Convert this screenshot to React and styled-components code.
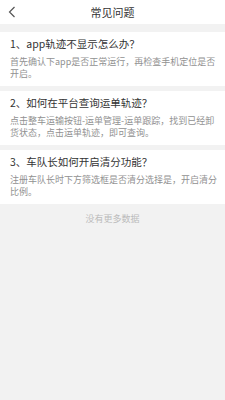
import React from "react"
import styled, { createGlobalStyle } from "styled-components"

const GlobalStyle = createGlobalStyle`
  html, body {
    margin: 0;
    padding: 0;
    background: #f2f2f2;
  }
  body {
    font-family: "Noto Sans CJK SC", "Noto Sans", sans-serif;
  }
`

const FAQS = [
  {
    q: "1、app轨迹不显示怎么办？",
    a: "首先确认下app是否正常运行，再检查手机定位是否开启。",
  },
  {
    q: "2、如何在平台查询运单轨迹？",
    a: "点击整车运输按钮-运单管理-运单跟踪，找到已经卸货状态，点击运单轨迹，即可查询。",
  },
  {
    q: "3、车队长如何开启清分功能？",
    a: "注册车队长时下方筛选框是否清分选择是，开启清分比例。",
  },
]

const App = () => {
  return (
    <Page>
      <GlobalStyle />
      <Header>
        <BackButton aria-label="返回">
          <svg width="8" height="12" viewBox="0 0 8 12">
            <polyline
              points="6.5,1 1.5,6 6.5,11"
              fill="none"
              stroke="#555"
              strokeWidth="1.2"
            />
          </svg>
        </BackButton>
        <Title>常见问题</Title>
      </Header>
      <List>
        {FAQS.map((item) => (
          <Card key={item.q}>
            <Question>{item.q}</Question>
            <Answer>{item.a}</Answer>
          </Card>
        ))}
        <NoMore>没有更多数据</NoMore>
      </List>
    </Page>
  )
}

const Page = styled.div`
  min-height: 400px;
  background: #f2f2f2;
`

const Header = styled.header`
  position: relative;
  height: 24px;
  background: #fff;
  display: flex;
  align-items: center;
  justify-content: center;
`

const BackButton = styled.button`
  position: absolute;
  left: 6px;
  top: 6px;
  padding: 0 2px;
  border: 0;
  background: none;
  display: flex;
  align-items: center;
`

const Title = styled.h1`
  margin: 0;
  font-size: 11px;
  font-weight: normal;
  color: #333;
  line-height: 24px;
`

const List = styled.main`
  padding-top: 8px;
  display: flex;
  flex-direction: column;
  gap: 5px;
`

const Card = styled.section`
  background: #fff;
  padding: 5px 6px 6px 10px;
`

const Question = styled.h2`
  margin: 0 0 5px;
  font-size: 10.5px;
  line-height: 14px;
  font-weight: normal;
  color: #333;
`

const Answer = styled.p`
  margin: 0;
  font-size: 9px;
  line-height: 12px;
  color: #919191;
`

const NoMore = styled.div`
  text-align: center;
  font-size: 9px;
  line-height: 20px;
  color: #bbb;
`

export default App
